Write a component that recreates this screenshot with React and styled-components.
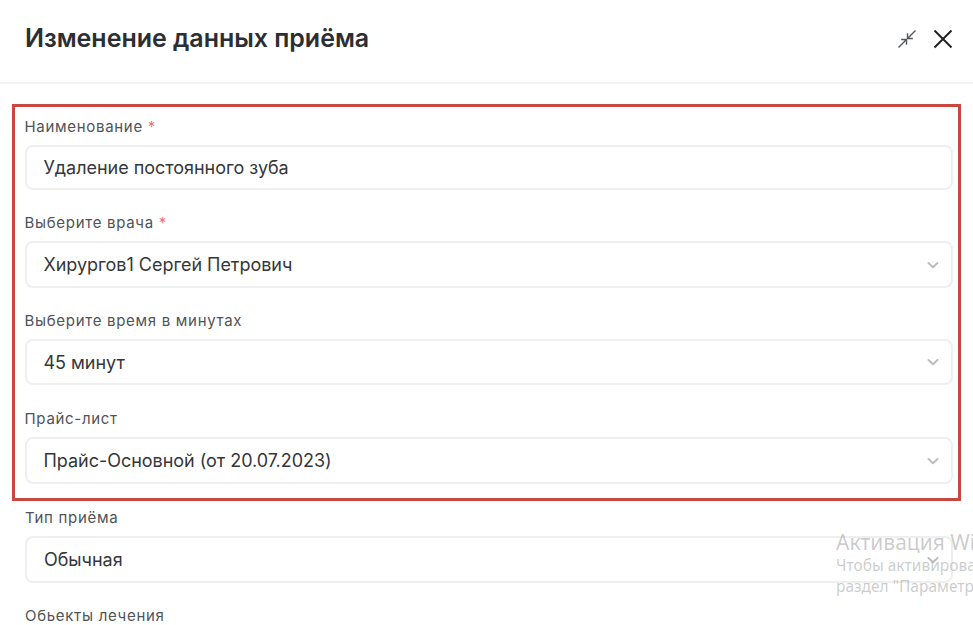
import React from "react";
import styled, { createGlobalStyle } from "styled-components";

const Global = createGlobalStyle`
  html, body { margin: 0; padding: 0; background: #fff; }
  body { font-family: Inter, "Noto Sans", sans-serif; overflow: hidden; }
`;
const Page = styled.div`
  position: relative; width: 973px; height: 625px; overflow: hidden; background: #fff;
`;
const Header = styled.header`
  display: flex; align-items: center; justify-content: space-between;
  height: 84px; padding: 0 20px 5px 25px; box-sizing: border-box;
  border-bottom: 2px solid #f5f5f5;
`;
const Title = styled.h1`
  margin: -2px 0 0; font-size: 25px; font-weight: 600; color: #2b2e33; line-height: 30px; letter-spacing: -0.03px;
`;
const Actions = styled.div`
  display: flex; align-items: center; gap: 16px;
`;
const IconSlot = styled.span`
  display: flex;
`;
const Body = styled.main`
  padding: 20px 12px 0 12px;
`;
const Highlight = styled.section`
  border: 3.5px solid #c9473f; box-sizing: border-box; height: 397px;
  padding: 10px 5px 0 9.5px; margin-bottom: 7px;
`;
const Field = styled.div`
  margin-bottom: ${p => p.$gap}px;
`;
const Label = styled.div`
  font-size: 15px; line-height: 20px; color: #505357; margin-bottom: 8px; letter-spacing: 0.7px;
`;
const Star = styled.span`
  color: #e8756e;
`;
const Control = styled.div`
  display: flex; align-items: center; justify-content: space-between;
  height: ${p => p.$h}px; box-sizing: border-box;
  border: 2px solid #efefef; border-radius: 8px;
  padding: 0 11px 0 17px;
  font-size: 18px; letter-spacing: -0.03px; color: #34373b;
`;
const Rest = styled.div`
  padding: 0 8px 0 13px;
`;
const Watermark = styled.div`
  position: absolute; left: 836px; top: 530px; white-space: nowrap;
  color: rgba(120,120,120,0.38); font-family: "Noto Sans", sans-serif;
`;
const WmTitle = styled.div`
  font-size: 21px; line-height: 25px;
`;
const WmLine = styled.div`
  font-size: 15.5px; line-height: 21px;
`;

const Chevron = () => (
  <svg width="14" height="14" viewBox="0 0 14 14" fill="none" stroke="#bdbdbd" strokeWidth="2" strokeLinecap="round" strokeLinejoin="round">
    <path d="M2.5 5 7 9.2 11.5 5" />
  </svg>
);
const Collapse = () => (
  <svg width="20" height="20" viewBox="0 0 20 20" fill="none" stroke="#55585c" strokeWidth="1.4">
    <path d="M1.5 18.5 9.5 10.5M4.2 10.5 9.5 10.5 9.5 15.8" />
    <path d="M18.5 1.5 10.5 9.5M10.5 4.2 10.5 9.5 15.8 9.5" />
  </svg>
);
const Close = () => (
  <svg width="20" height="20" viewBox="0 0 20 20" fill="none" stroke="#222" strokeWidth="2">
    <path d="M1.5 1.5 18.5 18.5M18.5 1.5 1.5 18.5" />
  </svg>
);

const fields = [
  { label: "Наименование", req: true, value: "Удаление постоянного зуба", h: 45, gap: 23 },
  { label: "Выберите врача", req: true, value: "Хирургов1 Сергей Петрович", select: true, h: 47, gap: 23 },
  { label: "Выберите время в минутах", value: "45 минут", select: true, h: 46, gap: 24 },
  { label: "Прайс-лист", value: "Прайс-Основной (от 20.07.2023)", select: true, h: 47, gap: 0 },
];

const FieldRow = ({ label, req, value, select, h, gap }) => (
  <Field $gap={gap}>
    <Label>{label}{req && <Star> *</Star>}</Label>
    <Control $h={h}>{value}{select && <Chevron />}</Control>
  </Field>
);

export default function App() {
  return (
    <Page>
      <Global />
      <Header>
        <Title>Изменение данных приёма</Title>
        <Actions>
          <IconSlot><Collapse /></IconSlot>
          <IconSlot><Close /></IconSlot>
        </Actions>
      </Header>
      <Body>
        <Highlight>
          {fields.map(f => <FieldRow key={f.label} {...f} />)}
        </Highlight>
        <Rest>
          <FieldRow label="Тип приёма" value="Обычная" select h={47} gap={23} />
          <FieldRow label="Обьекты лечения" value="" h={46} gap={0} />
        </Rest>
      </Body>
      <Watermark>
        <WmTitle>Активация Windows</WmTitle>
        <WmLine>Чтобы активировать Windows, перейдите в</WmLine>
        <WmLine>раздел "Параметры".</WmLine>
      </Watermark>
    </Page>
  );
}
